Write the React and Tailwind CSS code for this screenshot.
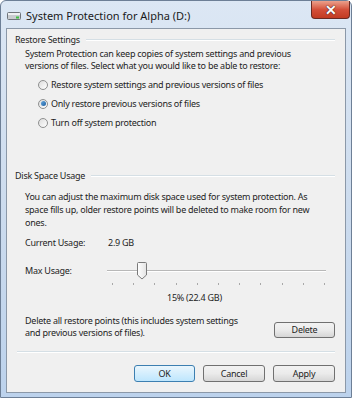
import React from "react";

const font = { fontFamily: '"Noto Sans", "Open Sans", sans-serif' };

const Radio = ({ checked, label }) => (
  <div className="flex h-[19px] items-center pl-[13px]">
    <span className="flex h-[10px] w-[10px] items-center justify-center rounded-full border border-[#8e8f8f] bg-gradient-to-br from-[#dcdcdc] to-[#ffffff]">
      {checked && <span className="h-[5px] w-[5px] rounded-full bg-gradient-to-br from-[#63a8e0] to-[#1e5fa0]" />}
    </span>
    <span className="ml-[3px]">{label}</span>
  </div>
);

const GroupHeader = ({ title }) => (
  <div className="flex h-[13px] items-center">
    <span className="pr-[6px]">{title}</span>
    <div className="flex-1 border-t border-b border-t-[#d5dfe5] border-b-white" />
  </div>
);

const Button = ({ children, focused, className = "" }) => (
  <button
    className={
      "flex items-center justify-center rounded-[3px] border text-[#1e1e1e] " +
      (focused
        ? "border-[#3c7fb1] bg-gradient-to-b from-[#eaf6fd] to-[#bee6fd] "
        : "border-[#707070] bg-gradient-to-b from-[#f2f2f2] via-[#ebebeb] to-[#d6d6d6] ") +
      className
    }
  >
    {children}
  </button>
);

const DriveIcon = () => (
  <svg width="14" height="8" viewBox="0 0 14 8">
    <rect x="0.5" y="0.5" width="13" height="7" rx="1" fill="#c9ccd0" stroke="#6f747a" />
    <rect x="1" y="1" width="12" height="2" fill="#eef0f2" />
    <rect x="9" y="4.5" width="3" height="2" fill="#3fbf3f" />
  </svg>
);

const Thumb = () => (
  <svg width="10" height="18" viewBox="0 0 10 18">
    <defs>
      <linearGradient id="tg" x1="0" y1="0" x2="1" y2="0">
        <stop offset="0" stopColor="#ffffff" />
        <stop offset="1" stopColor="#e3e3e3" />
      </linearGradient>
    </defs>
    <path d="M1.5 0.5 H8.5 Q9.5 0.5 9.5 1.5 V13 L5 17 L0.5 13 V1.5 Q0.5 0.5 1.5 0.5 Z" fill="url(#tg)" stroke="#7a7a7a" />
  </svg>
);

export default function App() {
  const ticks = Array.from({ length: 11 }, (_, i) => i);
  return (
    <div className="h-[400px] w-[355px] bg-white text-[9px] text-[#1e1e1e]" style={font}>
      <div className="flex h-[398px] w-[352px] flex-col rounded-t-[6px] border border-[#6d7f96] bg-gradient-to-b from-[#dce7f4] via-[#cddcee] to-[#bcd2ec]">
        {/* Title bar */}
        <div className="flex h-[27px] items-start">
          <div className="mt-[11px] ml-[6px]">
            <DriveIcon />
          </div>
          <div className="mt-[7px] ml-[5px] flex-1 text-[11px] text-[#1a1a1a]">System Protection for Alpha (D:)</div>
          <div className="mr-[1px] flex h-[18px] w-[39px] items-center justify-center rounded-b-[4px] border border-t-0 border-[#6b2a22] bg-gradient-to-b from-[#eba08c] via-[#d4503a] to-[#c23b22]">
            <span className="text-[14px] font-bold leading-none text-white" style={{ textShadow: "0 0 1px #3a120c, 0 0 1px #3a120c" }}>
              ✕
            </span>
          </div>
        </div>

        {/* Client area */}
        <div className="mx-[5px] mb-[4px] flex-1 border border-[#8b98a8] bg-[#f0f0f0] pt-[4px] pl-[8px] pr-[10px] tracking-[-0.25px]">
          <GroupHeader title="Restore Settings" />
          <div className="mt-[2px] pl-[10px] leading-[12px]">
            System Protection can keep copies of system settings and previous
            <br />
            versions of files. Select what you would like to be able to restore:
          </div>
          <div className="mt-[3px] pl-[10px]">
            <Radio label="Restore system settings and previous versions of files" />
            <Radio checked label="Only restore previous versions of files" />
            <Radio label="Turn off system protection" />
          </div>

          <div className="mt-[37px]">
            <GroupHeader title="Disk Space Usage" />
          </div>
          <div className="mt-[8px] pl-[10px] leading-[13px]">
            You can adjust the maximum disk space used for system protection. As
            <br />
            space fills up, older restore points will be deleted to make room for new
            <br />
            ones.
          </div>

          <div className="mt-[7px] flex h-[13px] items-center pl-[10px]">
            <span className="w-[83px]">Current Usage:</span>
            <span>2.9 GB</span>
          </div>

          <div className="mt-[12px] flex h-[20px] items-center pl-[10px]">
            <span className="w-[82px]">Max Usage:</span>
            <div className="relative h-[20px] w-[219px]">
              <div className="absolute top-[9px] left-0 right-0 border-t border-b border-t-[#b8b8b8] border-b-white" />
              <div className="absolute top-[1px] left-[30px]">
                <Thumb />
              </div>
            </div>
          </div>
          <div className="mt-[1px] flex h-[4px] items-center pl-[97px]">
            <div className="flex w-[213px] justify-between">
              {ticks.map((t) => (
                <span key={t} className="h-[2px] w-px bg-[#a8a8a8]" />
              ))}
            </div>
          </div>
          <div className="mt-[5px] h-[13px] pl-[152px] leading-[13px]">15% (22.4 GB)</div>

          <div className="mt-[11px] flex items-end pl-[10px]">
            <div className="flex-1 leading-[12px]">
              Delete all restore points (this includes system settings
              <br />
              and previous versions of files).
            </div>
            <Button className="mb-[1px] h-[16px] w-[61px]">Delete</Button>
          </div>

          <div className="mt-[12px] ml-[2px] border-t border-b border-t-[#d5dfe5] border-b-white" />

          <div className="mt-[12px] flex justify-end gap-[8px]">
            <Button focused className="h-[17px] w-[61px]">OK</Button>
            <Button className="h-[17px] w-[62px]">Cancel</Button>
            <Button className="h-[17px] w-[62px]">Apply</Button>
          </div>
        </div>
      </div>
    </div>
  );
}
